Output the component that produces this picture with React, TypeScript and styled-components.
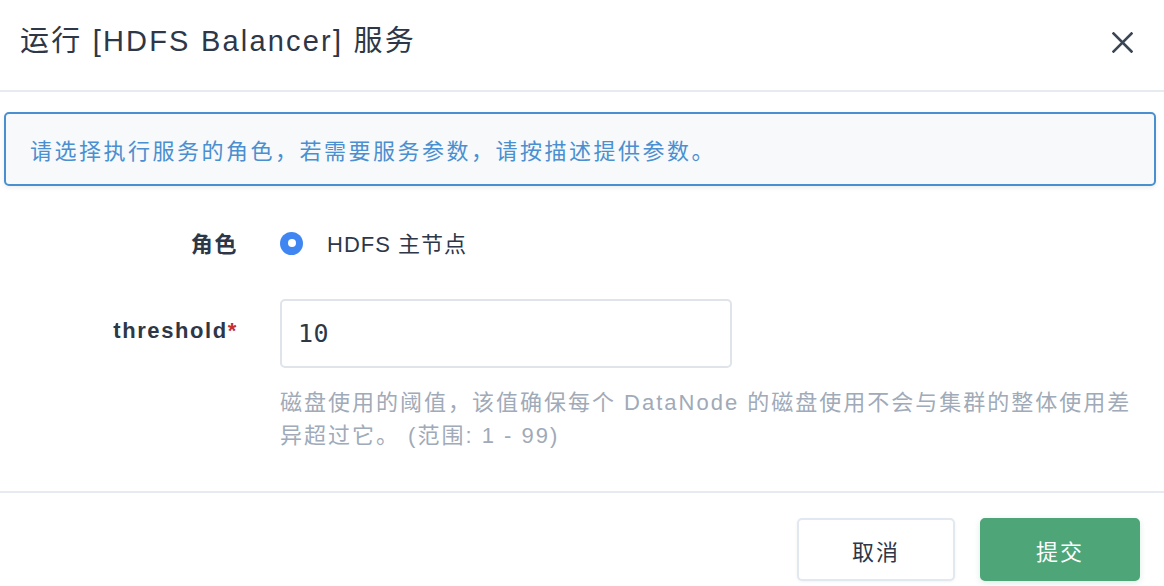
import React from "react";
import styled, { createGlobalStyle } from "styled-components";

const Global = createGlobalStyle`
  html, body { margin: 0; padding: 0; background: #fff; }
  body {
    font-family: "Liberation Sans", "Noto Sans CJK SC", sans-serif;
    color: #2d3748;
  }
  * { box-sizing: border-box; }
`;

const Dialog = styled.div`
  width: 1164px;
  height: 586px;
  overflow: hidden;
  display: flex;
  flex-direction: column;
  background: #fff;
`;

const Header = styled.header`
  height: 92px;
  display: flex;
  align-items: center;
  justify-content: space-between;
  padding: 0 30px 14px 20px;
  border-bottom: 2px solid #e6ebf1;
`;

const Title = styled.h1`
  margin: 0;
  font-size: 29px;
  font-weight: 400;
  letter-spacing: 2.2px;
  color: #2d3748;
`;

const CloseButton = styled.button`
  width: 24px;
  height: 24px;
  padding: 0;
  border: 0;
  background: transparent;
  display: flex;
  align-items: center;
  justify-content: center;
  cursor: pointer;
  margin-top: 8px;
`;

const Body = styled.div`
  padding: 20px 8px 0 4px;
  display: flex;
  flex-direction: column;
`;

const InfoBox = styled.div`
  height: 74px;
  display: flex;
  align-items: center;
  padding: 0 24px;
  border: 2px solid #4a8fd0;
  border-radius: 5px;
  background: #f7f9fb;
  box-shadow: 0 2px 4px rgba(45, 55, 72, 0.08);
  color: #4a8fd0;
  font-size: 22px;
  letter-spacing: 2.5px;
`;

const Form = styled.div`
  margin-top: 32px;
  display: grid;
  grid-template-columns: 234px 1fr;
  column-gap: 42px;
  row-gap: 33px;
  padding-right: 12px;
`;

const Label = styled.div<{ $h: number }>`
  height: ${(p) => p.$h}px;
  padding-bottom: ${(p) => (p.$h > 50 ? 5 : 0)}px;
  display: flex;
  align-items: center;
  justify-content: flex-end;
  font-size: 22px;
  font-weight: 700;
  letter-spacing: 1.6px;
  color: #2d3748;
`;

const Required = styled.span`
  color: #c53030;
`;

const RadioRow = styled.label`
  height: 48px;
  display: flex;
  align-items: center;
  gap: 24px;
  font-size: 22px;
  letter-spacing: 1px;
  color: #2d3748;
`;

const RadioDot = styled.span`
  width: 23px;
  height: 23px;
  border-radius: 50%;
  background: #3f86f2;
  display: flex;
  align-items: center;
  justify-content: center;
  margin-top: 2px;
  &::after {
    content: "";
    width: 8px;
    height: 8px;
    border-radius: 50%;
    background: #fff;
  }
`;

const Field = styled.div`
  display: flex;
  flex-direction: column;
`;

const Input = styled.input`
  width: 452px;
  height: 69px;
  padding: 0 16px;
  border: 2px solid #dfe3ea;
  border-radius: 5px;
  font-family: "DejaVu Sans Mono", "Liberation Mono", monospace;
  font-size: 25px;
  letter-spacing: 0.5px;
  color: #2d3748;
  outline: none;
`;

const Help = styled.p`
  margin: 18px 0 0;
  font-size: 22px;
  line-height: 33px;
  letter-spacing: 2px;
  color: #a0aab8;
`;

const Footer = styled.footer`
  margin-top: auto;
  border-top: 2px solid #e6ebf1;
  padding: 25px 24px 5px;
  display: flex;
  justify-content: flex-end;
  gap: 25px;
`;

const Button = styled.button<{ $primary?: boolean }>`
  width: ${(p) => (p.$primary ? 160 : 158)}px;
  height: 63px;
  border-radius: 5px;
  border: 2px solid ${(p) => (p.$primary ? "#4da578" : "#e2e8f0")};
  background: ${(p) => (p.$primary ? "#4da578" : "#fff")};
  color: ${(p) => (p.$primary ? "#fff" : "#2d3748")};
  box-shadow: ${(p) =>
    p.$primary ? "0 2px 6px rgba(77,165,120,0.2)" : "0 1px 3px rgba(45,55,72,0.06)"};
  font-family: "Liberation Sans", "Noto Sans CJK SC", sans-serif;
  font-size: 22px;
  letter-spacing: 2px;
  cursor: pointer;
`;

const Spacer = styled.div`
  flex: 1;
`;

export default function App() {
  return (
    <>
      <Global />
      <Dialog>
        <Header>
          <Title>运行 [HDFS Balancer] 服务</Title>
          <CloseButton aria-label="close">
            <svg width="21" height="21" viewBox="0 0 21 21">
              <path
                d="M1.5 1.5 L19.5 19.5 M19.5 1.5 L1.5 19.5"
                stroke="#3a4556"
                strokeWidth="2.6"
                strokeLinecap="square"
              />
            </svg>
          </CloseButton>
        </Header>
        <Body>
          <InfoBox>请选择执行服务的角色，若需要服务参数，请按描述提供参数。</InfoBox>
          <Form>
            <Label $h={48}>角色</Label>
            <RadioRow>
              <RadioDot />
              HDFS 主节点
            </RadioRow>
            <Label $h={69}>
              threshold<Required>*</Required>
            </Label>
            <Field>
              <Input defaultValue="10" />
              <Help>
                磁盘使用的阈值，该值确保每个 DataNode 的磁盘使用不会与集群的整体使用差异超过它。 (范围: 1 - 99)
              </Help>
            </Field>
          </Form>
        </Body>
        <Spacer />
        <Footer>
          <Button>取消</Button>
          <Button $primary>提交</Button>
        </Footer>
      </Dialog>
    </>
  );
}
